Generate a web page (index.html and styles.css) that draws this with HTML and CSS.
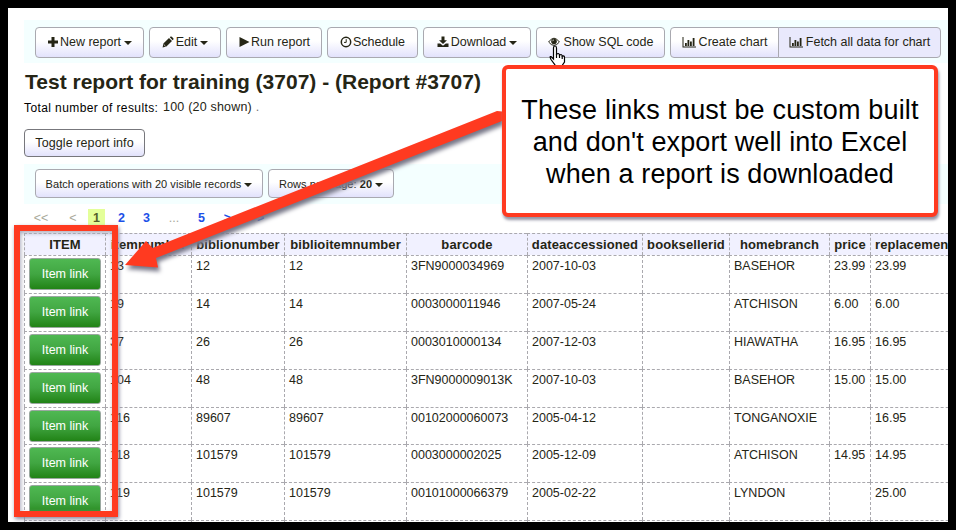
FILE: index.html
```html
<!DOCTYPE html>
<html lang="en">
<head>
<meta charset="utf-8">
<title>Test report for training</title>
<link rel="stylesheet" href="styles.css">
</head>
<body>
<main class="frame">
  <div class="toolbar">
    <button class="btn new"><svg class="icon" viewBox="0 0 12 12"><path d="M4.500 1h3v3.500H11v3H7.500V11h-3V7.500H1v-3h3.500z"/></svg><span>New report</span><i class="caret"></i></button>
    <button class="btn edit"><svg class="icon" viewBox="0 0 12 12"><path d="M.6 11.400l.8-3.800L7 2l3 3-5.600 5.600zM7.800 1.300l.8-.7q.6-.4 1.200.1l1.500 1.500q.5.600.1 1.200l-.8.800z"/><path class="cut" d="M1.800 8.500l1.700 1.700"/></svg><span>Edit</span><i class="caret"></i></button>
    <button class="btn run"><svg class="icon" viewBox="0 0 12 12"><path d="M1.500 1L11.500 6l-10 5z"/></svg><span>Run report</span></button>
    <button class="btn schedule"><svg class="icon" viewBox="0 0 12 12"><circle class="line" cx="6" cy="6" r="4.700"/><path class="thin" d="M6.200 3.200v3.200H4"/></svg><span>Schedule</span></button>
    <button class="btn download"><svg class="icon" viewBox="0 0 12 12"><path d="M4.500.5h3v3.700h2.500L6 8 2 4.200h2.500zM.5 7.500h2.700L6 9.800l2.800-2.300h2.700v3.500H.5z"/></svg><span>Download</span><i class="caret"></i></button>
    <button class="btn sql"><svg class="icon" viewBox="0 0 12 12"><path class="thin" d="M.6 6Q6-1.600 11.400 6 6 12.800.6 6z"/><circle cx="6" cy="5.500" r="2.800"/><path class="cut" d="M4.600 5.200q.1-1.200 1.300-1.300"/></svg><span>Show SQL code</span></button>
    <div class="group">
      <button class="btn chart"><svg class="icon wide" viewBox="0 0 14 12"><path d="M.5 1h1v9.500H14v1H.5zM3 7h1.800v3H3zM5.500 4h1.800v6H5.500zM8 5.500h1.800v4.500H8zM10.700 2h1.800V10h-1.800z"/></svg><span>Create chart</span></button>
      <button class="btn fetch"><svg class="icon wide" viewBox="0 0 14 12"><path d="M.5 1h1v9.500H14v1H.5zM3 7h1.800v3H3zM5.500 4h1.800v6H5.500zM8 5.500h1.800v4.500H8zM10.700 2h1.800V10h-1.800z"/></svg><span>Fetch all data for chart</span></button>
    </div>
  </div>

  <h1><span>Test report for training (3707) - (Report #3707)</span></h1>
  <p class="total"><span class="label">Total number of results:</span><span class="count">100 (20 shown) <em>.</em></span></p>
  <button class="btn toggle"><span>Toggle report info</span></button>

  <div class="toolbar lower">
    <button class="btn batch"><span>Batch operations with 20 visible records</span><i class="caret"></i></button>
    <button class="btn rows"><span>Rows per page: <b>20</b></span><i class="caret"></i></button>
  </div>

  <nav class="pages"><span class="off">&lt;&lt;</span><span class="off">&lt;</span><span class="current">1</span><a>2</a><a>3</a><span class="off">...</span><a>5</a><a>&gt;</a><a>&gt;&gt;</a></nav>

  <table>
    <colgroup><col class="c1"><col class="c2"><col class="c3"><col class="c4"><col class="c5"><col class="c6"><col class="c7"><col class="c8"><col class="c9"><col class="c10"></colgroup>
    <thead><tr><th>ITEM</th><th>itemnumber</th><th>biblionumber</th><th>biblioitemnumber</th><th>barcode</th><th>dateaccessioned</th><th>booksellerid</th><th>homebranch</th><th>price</th><th class="last">replacementprice</th></tr></thead>
    <tbody>
      <tr><td><a class="item">Item link</a></td><td>13</td><td>12</td><td>12</td><td>3FN9000034969</td><td>2007-10-03</td><td></td><td class="branch">BASEHOR</td><td>23.99</td><td>23.99</td></tr>
      <tr><td><a class="item">Item link</a></td><td>19</td><td>14</td><td>14</td><td>0003000011946</td><td>2007-05-24</td><td></td><td class="branch">ATCHISON</td><td>6.00</td><td>6.00</td></tr>
      <tr><td><a class="item">Item link</a></td><td>37</td><td>26</td><td>26</td><td>0003010000134</td><td>2007-12-03</td><td></td><td class="branch">HIAWATHA</td><td>16.95</td><td>16.95</td></tr>
      <tr><td><a class="item">Item link</a></td><td>104</td><td>48</td><td>48</td><td>3FN9000009013K</td><td>2007-10-03</td><td></td><td class="branch">BASEHOR</td><td>15.00</td><td>15.00</td></tr>
      <tr class="short"><td><a class="item">Item link</a></td><td>116</td><td>89607</td><td>89607</td><td>00102000060073</td><td>2005-04-12</td><td></td><td class="branch">TONGANOXIE</td><td></td><td>16.95</td></tr>
      <tr><td><a class="item">Item link</a></td><td>118</td><td>101579</td><td>101579</td><td>0003000002025</td><td>2005-12-09</td><td></td><td class="branch">ATCHISON</td><td>14.95</td><td>14.95</td></tr>
      <tr><td><a class="item">Item link</a></td><td>119</td><td>101579</td><td>101579</td><td>00101000066379</td><td>2005-02-22</td><td></td><td class="branch">LYNDON</td><td></td><td>25.00</td></tr>
      <tr><td></td><td></td><td></td><td></td><td></td><td></td><td></td><td></td><td></td><td></td></tr>
    </tbody>
  </table>
</main>

<div class="highlight"></div>
<svg class="cursor" viewBox="0 0 18 24"><path d="M5.500 14V3Q5.500 1 7 1t1.500 2v6q3-1 3 1 2.500-1 2.700 1 2.300-.5 2.300 1.500V17l-2 3v3H7v-3l-4-5.500q-1.800-3.300 0-3z"/><path d="M8.500 9v4M11.500 10v3M14.200 11v3"/></svg>
<svg class="arrow" viewBox="0 0 956 530"><path d="M125 265L146 241l6.500 7L497 111l5 .500v9.500L156 258l2 9.500z"/></svg>
<aside class="callout"><p class="l1">These links must be custom built</p><p class="l2">and don't export well into Excel</p><p class="l3">when a report is downloaded</p></aside>
</body>
</html>
```

FILE: styles.css
```css
* { box-sizing: border-box; }
body {
  margin: 0;
  width: 956px;
  height: 530px;
  overflow: hidden;
  position: relative;
  background: #000;
  color: #252515;
  font-family: "Liberation Sans", Arial, sans-serif;
  font-size: 12.5px;
}
.frame {
  width: 940px;
  height: 514px;
  margin: 8px;
  padding: 12px 0 0 16px;
  overflow: hidden;
  background: #fff;
}
.toolbar {
  display: flex;
  gap: 5px;
  height: 43px;
  padding: 7px 0 0 11px;
  background: #f4ffff;
}
.btn {
  display: flex;
  align-items: center;
  justify-content: center;
  flex: none;
  height: 31px;
  padding: 0 0 2px;
  border: 1px solid #a9a9b0;
  border-radius: 4px;
  background: linear-gradient(#fff 45%, #e2e2fc);
  color: #252515;
  font: 12.5px "Liberation Sans", Arial, sans-serif;
  white-space: nowrap;
}
.icon { width: 12px; height: 12px; margin-right: 1px; fill: #252515; flex: none; }
.icon.wide { width: 14px; margin-right: 3px; }
.cut { fill: none; stroke: #fff; stroke-width: .7; }
.line { fill: none; stroke: #252515; stroke-width: 1.500; }
.thin { fill: none; stroke: #252515; stroke-width: 1; }
.caret {
  border: 4px solid transparent;
  border-top-color: #252515;
  border-bottom: 0;
  margin: 3px 0 0 3px;
}
.new { width: 109px; }
.edit { width: 72px; }
.edit .icon { margin-right: 2px; }
.run { width: 96px; }
.schedule { width: 91px; }
.download { width: 108px; }
.download .icon { margin-right: 2px; }
.sql { width: 129px; }
.sql .icon { margin-right: 4px; }
.group { display: flex; }
.chart { width: 109px; border-radius: 4px 0 0 4px; }
.fetch { width: 163px; margin-left: -1px; border-radius: 0 4px 4px 0; background: #e9e9fc; }
h1 {
  margin: 5px 0 0 1px;
  height: 27px;
  font-size: 21px;
  line-height: 27px;
  white-space: nowrap;
}
.total { display: flex; margin: 3px 0 0; height: 18px; line-height: 18px; color: #000; }
.label { width: 139px; padding-top: 1px; font-size: 12px; letter-spacing: .4px; }
.count { color: #252515; letter-spacing: .2px; }
.count em { font-style: normal; color: #777; }
.toggle { width: 121px; height: 28px; margin-top: 13px; border-color: #77777c; padding-bottom: 0; letter-spacing: .1px; }
.lower { height: 40px; margin-top: 7px; padding-top: 5px; }
.lower .btn { height: 29px; font-size: 11px; padding-bottom: 0; letter-spacing: .05px; }
.batch { width: 228px; }
.rows { width: 126px; }
.pages {
  display: grid;
  grid-template-columns: 34px 30px 17px 33px 17px 38px 17px 35px 24px;
  align-items: center;
  height: 17px;
  margin: 5px 0 7px;
  text-align: center;
  font-weight: bold;
  color: #1c50e8;
}
.pages .off { color: #a9a99a; font-weight: normal; }
.pages .current { height: 17px; line-height: 18px; background: #e4ff99; color: #55602b; }
table { width: 960px; table-layout: fixed; border-spacing: 0; }
.c1 { width: 81px; } .c2 { width: 86px; } .c3 { width: 93px; } .c4 { width: 122px; }
.c5 { width: 121px; } .c6 { width: 115px; } .c7 { width: 87px; } .c8 { width: 100px; }
.c9 { width: 41px; } .c10 { width: 114px; }
th, td {
  border: 0 dashed #aaa9ae;
  border-width: 1px 0 0 1px;
  white-space: nowrap;
}
th { height: 22px; padding: 0; background: #f1f1ff; font-size: 13px; letter-spacing: .1px; }
th.last { text-align: left; padding-left: 4px; }
td { height: 38px; padding: 3px 4px 0; vertical-align: top; line-height: 15px; }
.short td { height: 37px; }
td.branch { letter-spacing: 0; }
.item {
  display: block;
  width: 72px;
  height: 32px;
  margin-top: -1px;
  border: 1px solid #9aa8a0;
  border-radius: 3px;
  background: linear-gradient(#4fb852, #41a642 50%, #218316);
  color: #fff;
  line-height: 31px;
  text-align: center;
}
.highlight {
  position: absolute;
  left: 14px;
  top: 225px;
  width: 104px;
  height: 292px;
  border: 6px solid #ff3a20;
  box-shadow: 1px 2px 4px #8888a0, inset 1px 2px 4px #aaaabd;
}
.arrow { position: absolute; left: 0; top: 0; width: 956px; height: 530px; fill: #ff3a20; filter: drop-shadow(2px 4px 2px #777788); }
.cursor { position: absolute; left: 548px; top: 45px; width: 18px; height: 24px; fill: #fff; stroke: #000; stroke-width: 1.200; }
.callout {
  position: absolute;
  left: 502px;
  top: 65px;
  width: 436px;
  height: 152px;
  padding-top: 25px;
  border: 4px solid #ff3a20;
  border-radius: 6px;
  background: #fff;
  box-shadow: 1px 3px 3px #9595a5;
  color: #000;
  font-size: 27px;
  line-height: 32px;
  text-align: center;
  white-space: nowrap;
}
.callout p { margin: 0; }
.callout .l1 { letter-spacing: .18px; }
.callout .l2, .callout .l3 { letter-spacing: .1px; }
```
